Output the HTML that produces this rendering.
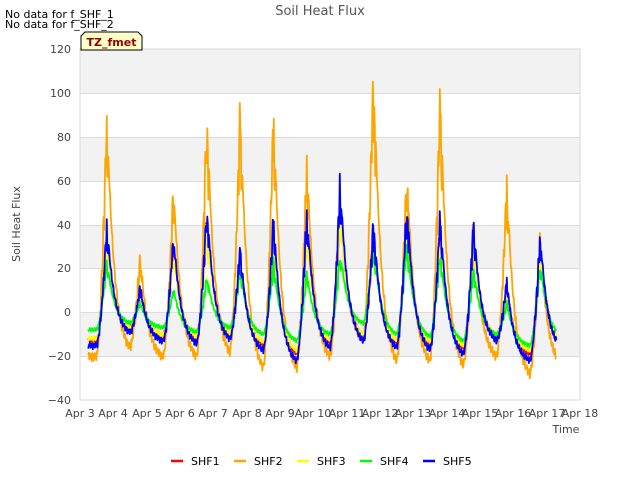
<!DOCTYPE html>
<html><head><meta charset="utf-8"><style>
body{margin:0;background:#fff;font-family:"Liberation Sans","DejaVu Sans",sans-serif;}
svg text{font-family:"DejaVu Sans","Liberation Sans",sans-serif;}
</style></head><body>
<svg id="s" width="640" height="480" xmlns="http://www.w3.org/2000/svg">
<rect width="640" height="480" fill="#fff"/>
<rect x="80" y="49" width="500" height="351" fill="#fff" stroke="#d8d8d8"/>
<rect x="80.5" y="49.5" width="499" height="44" fill="#f2f2f2"/>
<rect x="80.5" y="137" width="499" height="44" fill="#f2f2f2"/>
<rect x="80.5" y="225" width="499" height="43.5" fill="#f2f2f2"/>
<rect x="80.5" y="312" width="499" height="44" fill="#f2f2f2"/>
<g stroke="#dcdcdc" stroke-width="1">
<line x1="80" x2="580" y1="93.5" y2="93.5"/><line x1="80" x2="580" y1="137.5" y2="137.5"/>
<line x1="80" x2="580" y1="181.5" y2="181.5"/><line x1="80" x2="580" y1="225.5" y2="225.5"/>
<line x1="80" x2="580" y1="268.5" y2="268.5"/><line x1="80" x2="580" y1="312.5" y2="312.5"/>
<line x1="80" x2="580" y1="356.5" y2="356.5"/>
</g>
<g id="lines" fill="none" stroke-width="1.8" stroke-linejoin="round"></g>
<g font-size="11" fill="#444" text-anchor="end">
<text x="71" y="53">120</text><text x="71" y="97">100</text><text x="71" y="141">80</text>
<text x="71" y="185">60</text><text x="71" y="229">40</text><text x="71" y="272">20</text>
<text x="71" y="316">0</text><text x="71" y="360">−20</text><text x="71" y="404">−40</text>
</g>
<g font-size="11" fill="#444" text-anchor="middle">
<text x="80" y="417">Apr 3</text><text x="113" y="417">Apr 4</text><text x="147" y="417">Apr 5</text>
<text x="180" y="417">Apr 6</text><text x="213" y="417">Apr 7</text><text x="247" y="417">Apr 8</text>
<text x="280" y="417">Apr 9</text><text x="313" y="417">Apr 10</text><text x="347" y="417">Apr 11</text>
<text x="380" y="417">Apr 12</text><text x="413" y="417">Apr 13</text><text x="447" y="417">Apr 14</text>
<text x="480" y="417">Apr 15</text><text x="513" y="417">Apr 16</text><text x="547" y="417">Apr 17</text>
<text x="580" y="417">Apr 18</text>
</g>
<text x="566" y="433" font-size="11" fill="#444" text-anchor="middle">Time</text>
<text x="320" y="15" font-size="13" fill="#555" text-anchor="middle">Soil Heat Flux</text>
<text transform="translate(20,224) rotate(-90)" font-size="11" fill="#444" text-anchor="middle">Soil Heat Flux</text>
<text x="5" y="18" font-size="11" fill="#000">No data for f_SHF_1</text>
<text x="5" y="28" font-size="11" fill="#000">No data for f_SHF_2</text>
<path d="M81 50 V36 L85 32 H138 L142 36 V50 Z" fill="#ffffc8" stroke="#000" stroke-width="1"/>
<text x="111.5" y="46" font-size="11" font-weight="bold" fill="#990000" text-anchor="middle">TZ_fmet</text>
<g stroke-width="2.5">
<line x1="171" x2="183" y1="461" y2="461" stroke="#ff0000"/>
<line x1="234" x2="246" y1="461" y2="461" stroke="#ffa500"/>
<line x1="297" x2="309" y1="461" y2="461" stroke="#ffff00"/>
<line x1="360" x2="372" y1="461" y2="461" stroke="#00ff00"/>
<line x1="423" x2="435" y1="461" y2="461" stroke="#0000ff"/>
</g>
<g font-size="11" fill="#000">
<text x="191" y="465">SHF1</text><text x="254" y="465">SHF2</text><text x="317" y="465">SHF3</text>
<text x="380" y="465">SHF4</text><text x="443" y="465">SHF5</text>
</g>
</svg>
<script>
(function(){
var bp=[43,13,38,53,32,47,50,64,45,54,48,44,16,39];
var bm=[-15,-9,-13,-14,-12,-17,-22,-16,-13,-16,-17,-19,-13,-22,-17];
var op=[95,28,62,97,98,97,74,52,119,70,106,45,64,38];
var om=[-20,-16,-20,-20,-18,-25,-25,-20,-12,-22,-22,-24,-20,-28,-25];
var gp=[25,5,12,18,22,25,20,30,35,35,30,22,5,25];
var gm=[-8,-5,-7,-9,-7,-10,-13,-10,-5,-10,-11,-13,-10,-15,-11];
function mk(P,M,noise,seed){
  var pts=[];
  for(var T=0.25;T<=14.3;T+=0.015){
    var v;
    if(T<0.5){v=M[0];}
    else{
      var d=Math.floor(T-0.5); if(d>13)d=13;
      var u=T-(d+0.5);
      var mp=M[d],p=P[d],mn=M[d+1];
      if(u<0.3){var s=u/0.3;v=mp+(p-mp)*Math.pow(s,1.6)*(0.75+0.25*Math.abs(Math.sin(u*60+seed+d)));}
      else{var k=4.5,s2=u-0.3,e=Math.exp(-k*0.7);
        v=mn+(p-mn)*Math.max(0,(Math.exp(-k*s2)-e)/(1-e));
        if(s2<0.06) v*= (0.85+0.15*Math.cos(s2*120+d));}
    }
    v+=noise*(Math.sin(T*97+seed)*0.6+Math.sin(T*231+seed*2)*0.4);
    var x=80+T*33.333, y=312.25-v*2.19375;
    pts.push(x.toFixed(1)+","+y.toFixed(1));
  }
  return pts.join(" ");
}
function sc(a,f,o){return a.map(function(x){return x*f+(o||0);});}
var g=document.getElementById("lines");
var defs=[
 [sc(bp,0.9),sc(bm,0.85),1.5,1,"#ff0000"],
 [op,om,2.5,2,"#ffa500"],
 [sc(bp,0.8),sc(bm,0.8),1.2,3,"#ffff00"],
 [gp,gm,1,4,"#00ff00"],
 [bp,bm,1.8,5,"#0000ff"]
];
var h="";
defs.forEach(function(d){h+='<polyline stroke="'+d[4]+'" points="'+mk(d[0],d[1],d[2],d[3])+'"/>';});
g.innerHTML=h;
})();
</script>
</body></html>
